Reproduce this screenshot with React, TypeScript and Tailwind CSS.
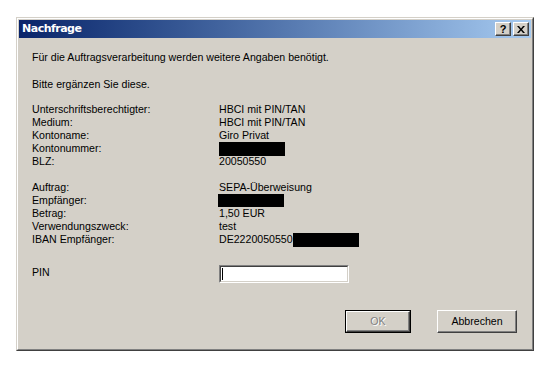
export default function App() {
  const bevelOut =
    'border border-t-white border-l-white border-r-[#404040] border-b-[#404040] shadow-[inset_-1px_-1px_0_#808080]';

  const rows1: [string, string | null][] = [
    ['Unterschriftsberechtigter:', 'HBCI mit PIN/TAN'],
    ['Medium:', 'HBCI mit PIN/TAN'],
    ['Kontoname:', 'Giro Privat'],
    ['Kontonummer:', null],
    ['BLZ:', '20050550'],
  ];

  return (
    <div className="w-[548px] h-[367px] bg-white pl-4 pt-[17px] font-['Liberation_Sans',Arial,sans-serif] text-[10.6px] text-black">
      <div className="w-[518px] h-[334px] bg-[#D4D0C8] border border-t-[#D4D0C8] border-l-[#D4D0C8] border-r-[#404040] border-b-[#404040] flex flex-col">
        <div className="flex-1 flex flex-col border border-t-white border-l-white border-r-[#808080] border-b-[#808080] p-px">
          {/* Titelleiste */}
          <div className="h-[18px] flex items-center bg-gradient-to-r from-[#0A246A] to-[#A6CAF0] pl-[3px] pr-[2px]">
            <span className="text-white font-bold text-[11px] font-['DejaVu_Sans',sans-serif] tracking-[-0.5px] flex-1">
              Nachfrage
            </span>
            <div className={`w-4 h-[14px] bg-[#D4D0C8] ${bevelOut} flex items-center justify-center font-bold text-[11px] leading-none`}>
              ?
            </div>
            <div className={`w-4 h-[14px] ml-[2px] bg-[#D4D0C8] ${bevelOut} flex items-center justify-center`}>
              <svg width="8" height="7" viewBox="0 0 8 7">
                <path d="M0 0h2l2 2.5L6 0h2L5 3.5 8 7H6L4 4.5 2 7H0l3-3.5z" fill="#000" />
              </svg>
            </div>
          </div>

          {/* Inhalt */}
          <div className="flex-1 flex flex-col pl-[13px] pr-[13px] pt-[13px] leading-[13px]">
            <div>Für die Auftragsverarbeitung werden weitere Angaben benötigt.</div>
            <div className="mt-[14px]">Bitte ergänzen Sie diese.</div>

            <div className="mt-[12px] grid grid-cols-[187px_1fr]">
              {rows1.map(([l, v]) => (
                <>
                  <div key={l}>{l}</div>
                  <div key={l + 'v'} className="h-[13px]">
                    {v ?? <div className="w-[66px] h-[14px] bg-black" />}
                  </div>
                </>
              ))}
            </div>

            <div className="mt-[13px] grid grid-cols-[187px_1fr]">
              <div>Auftrag:</div>
              <div>SEPA-Überweisung</div>
              <div>Empfänger:</div>
              <div className="h-[13px]">
                <div className="-ml-[1px] w-[66px] h-[13px] bg-black" />
              </div>
              <div>Betrag:</div>
              <div>1,50 EUR</div>
              <div>Verwendungszweck:</div>
              <div>test</div>
              <div>IBAN Empfänger:</div>
              <div className="flex items-start">
                DE2220050550
                <span className="inline-block w-[66px] h-[14px] bg-black" />
              </div>
            </div>

            <div className="mt-[18px] grid grid-cols-[187px_1fr] items-center">
              <div className="-mt-[3px]">PIN</div>
              <div className="w-[130px] h-[18px] border border-t-[#808080] border-l-[#808080] border-r-white border-b-white">
                <div className="h-full bg-white border border-t-[#404040] border-l-[#404040] border-r-[#D4D0C8] border-b-[#D4D0C8] pl-[1px] pt-[1px]">
                  <div className="w-px h-[12px] bg-black" />
                </div>
              </div>
            </div>

            <div className="mt-[27px] flex justify-end pr-[1px]">
              <div className="w-[66px] h-[23px] border border-black">
                <div className={`h-full bg-[#D4D0C8] ${bevelOut} flex items-center justify-center text-[#808080] [text-shadow:1px_1px_0_#fff]`}>
                  OK
                </div>
              </div>
              <div className={`ml-[26px] w-[80px] h-[23px] bg-[#D4D0C8] ${bevelOut} flex items-center justify-center`}>
                Abbrechen
              </div>
            </div>
          </div>
        </div>
      </div>
    </div>
  );
}
